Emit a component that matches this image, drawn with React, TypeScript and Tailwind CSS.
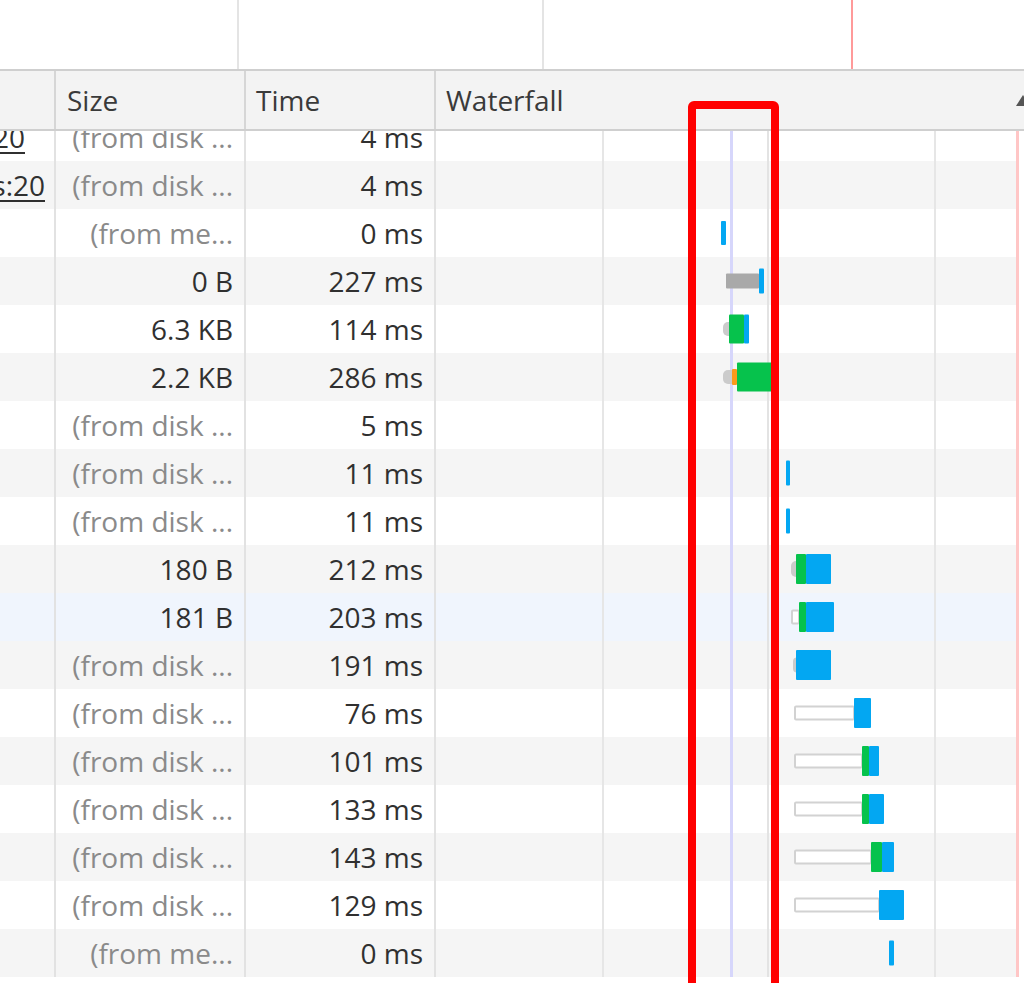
import React from "react";

type Bar = { x0: number; x1: number; h: number; c: string; kind?: "stub" | "outline" | "solid" };
type Row = {
  init?: { t: string; pr: number };
  size: string;
  dark?: boolean;
  time: string;
  bg: string;
  bars: Bar[];
};

const BLUE = "#03a7f2";
const GREEN = "#06c24c";
const GRAY = "#a9a9a9";
const STUB = "#cbcbcb";
const ORANGE = "#fb9a1b";
const W = "#ffffff";
const G = "#f5f5f5";
const SEL = "#f0f5fd";

const rows: Row[] = [
  { init: { t: "20", pr: 31 }, size: "(from disk ...", time: "4 ms", bg: W, bars: [] },
  { init: { t: "s:20", pr: 11 }, size: "(from disk ...", time: "4 ms", bg: G, bars: [] },
  { size: "(from me...", time: "0 ms", bg: W, bars: [{ x0: 721, x1: 726, h: 24, c: BLUE }] },
  {
    size: "0 B", dark: true, time: "227 ms", bg: G,
    bars: [
      { x0: 726, x1: 759, h: 15, c: GRAY },
      { x0: 759, x1: 764, h: 25, c: BLUE },
    ],
  },
  {
    size: "6.3 KB", dark: true, time: "114 ms", bg: W,
    bars: [
      { x0: 723, x1: 730, h: 14, c: STUB, kind: "stub" },
      { x0: 729, x1: 744, h: 29, c: GREEN },
      { x0: 744, x1: 749, h: 29, c: BLUE },
    ],
  },
  {
    size: "2.2 KB", dark: true, time: "286 ms", bg: G,
    bars: [
      { x0: 723, x1: 732, h: 14, c: STUB, kind: "stub" },
      { x0: 732, x1: 737, h: 16, c: ORANGE },
      { x0: 737, x1: 772, h: 29, c: GREEN },
    ],
  },
  { size: "(from disk ...", time: "5 ms", bg: W, bars: [] },
  { size: "(from disk ...", time: "11 ms", bg: G, bars: [{ x0: 786, x1: 790, h: 25, c: BLUE }] },
  { size: "(from disk ...", time: "11 ms", bg: W, bars: [{ x0: 786, x1: 790, h: 25, c: BLUE }] },
  {
    size: "180 B", dark: true, time: "212 ms", bg: G,
    bars: [
      { x0: 791, x1: 797, h: 16, c: STUB, kind: "stub" },
      { x0: 796, x1: 806, h: 30, c: GREEN },
      { x0: 806, x1: 831, h: 30, c: BLUE },
    ],
  },
  {
    size: "181 B", dark: true, time: "203 ms", bg: SEL,
    bars: [
      { x0: 791, x1: 800, h: 15, c: STUB, kind: "outline" },
      { x0: 799, x1: 806, h: 30, c: GREEN },
      { x0: 806, x1: 834, h: 30, c: BLUE },
    ],
  },
  {
    size: "(from disk ...", time: "191 ms", bg: G,
    bars: [
      { x0: 793, x1: 797, h: 15, c: STUB, kind: "stub" },
      { x0: 796, x1: 831, h: 30, c: BLUE },
    ],
  },
  {
    size: "(from disk ...", time: "76 ms", bg: W,
    bars: [
      { x0: 794, x1: 855, h: 15, c: STUB, kind: "outline" },
      { x0: 854, x1: 871, h: 30, c: BLUE },
    ],
  },
  {
    size: "(from disk ...", time: "101 ms", bg: G,
    bars: [
      { x0: 794, x1: 863, h: 15, c: STUB, kind: "outline" },
      { x0: 862, x1: 869, h: 30, c: GREEN },
      { x0: 869, x1: 879, h: 30, c: BLUE },
    ],
  },
  {
    size: "(from disk ...", time: "133 ms", bg: W,
    bars: [
      { x0: 794, x1: 863, h: 15, c: STUB, kind: "outline" },
      { x0: 862, x1: 869, h: 30, c: GREEN },
      { x0: 869, x1: 884, h: 30, c: BLUE },
    ],
  },
  {
    size: "(from disk ...", time: "143 ms", bg: G,
    bars: [
      { x0: 794, x1: 872, h: 15, c: STUB, kind: "outline" },
      { x0: 871, x1: 882, h: 30, c: GREEN },
      { x0: 882, x1: 894, h: 30, c: BLUE },
    ],
  },
  {
    size: "(from disk ...", time: "129 ms", bg: W,
    bars: [
      { x0: 794, x1: 880, h: 15, c: STUB, kind: "outline" },
      { x0: 879, x1: 904, h: 30, c: BLUE },
    ],
  },
  { size: "(from me...", time: "0 ms", bg: G, bars: [{ x0: 889, x1: 894, h: 25, c: BLUE }] },
];

const WF_LEFT = 436;

function BarEl({ b }: { b: Bar }) {
  const base: React.CSSProperties = {
    left: b.x0 - WF_LEFT,
    width: b.x1 - b.x0,
    height: b.h,
  };
  if (b.kind === "outline") {
    return (
      <div
        className="absolute top-1/2 -translate-y-1/2 rounded-[2px] border-2 border-[#d2d2d2] bg-white"
        style={base}
      />
    );
  }
  if (b.kind === "stub") {
    return (
      <div
        className="absolute top-1/2 -translate-y-1/2 rounded-l-[5px] bg-[#cbcbcb]"
        style={base}
      />
    );
  }
  return (
    <div
      className="absolute top-1/2 -translate-y-1/2 rounded-[1px]"
      style={{ ...base, backgroundColor: b.c }}
    />
  );
}

export default function App() {
  return (
    <div
      className="relative h-[983px] w-[1024px] overflow-hidden bg-white text-[28px] leading-none text-[#333]"
      style={{ fontFamily: '"Open Sans", "Noto Sans", sans-serif' }}
    >
      {/* overview strip */}
      <div className="flex h-[69px]">
        <div className="w-[239px] shrink-0 border-r-2 border-[#e4e4e4]" />
        <div className="w-[305px] shrink-0 border-r-2 border-[#e4e4e4]" />
        <div className="w-[309px] shrink-0 border-r-2 border-[#ff9a9a]" />
        <div className="flex-1" />
      </div>

      {/* header */}
      <div className="flex h-[62px] border-y-2 border-[#cfcfcf] bg-[#f3f3f3] text-[#3a3a3a]">
        <div className="w-[56px] shrink-0 border-r-2 border-[#d6d6d6]" />
        <div className="flex w-[190px] shrink-0 items-center border-r-2 border-[#d6d6d6] pl-[11px]">
          Size
        </div>
        <div className="flex w-[190px] shrink-0 items-center border-r-2 border-[#d6d6d6] pl-[10px]">
          Time
        </div>
        <div className="flex min-w-0 flex-1 items-center justify-between overflow-hidden pl-[10px]">
          <span>Waterfall</span>
          <svg width="14" height="11" viewBox="0 0 14 11" className="-mr-[6px] mt-[1px]">
            <polygon points="7,0 14,11 0,11" fill="#555" />
          </svg>
        </div>
      </div>

      {/* body */}
      <div className="relative h-[852px] overflow-hidden">
        <div className="-mt-[18px] flex flex-col">
          {rows.map((r, i) => (
            <div key={i} className="flex h-[48px]" style={{ backgroundColor: r.bg }}>
              <div className="flex w-[56px] shrink-0 items-center justify-end overflow-hidden border-r-2 border-[#e2e2e2]">
                {r.init && (
                  <span
                    className="whitespace-nowrap text-[#303030] underline decoration-2 underline-offset-[4px]"
                    style={{ paddingRight: r.init.pr - 2 }}
                  >
                    {r.init.t}
                  </span>
                )}
              </div>
              <div
                className={`flex w-[190px] shrink-0 items-center justify-end whitespace-nowrap border-r-2 border-[#e2e2e2] pr-[11px] ${
                  r.dark ? "text-[#303030]" : "text-[#8a8a8a]"
                }`}
              >
                {r.size}
              </div>
              <div className="flex w-[190px] shrink-0 items-center justify-end whitespace-nowrap border-r-2 border-[#e2e2e2] pr-[11px] text-[#303030]">
                {r.time}
              </div>
              <div className="relative flex-1">
                {/* vertical grid lines */}
                <div className="absolute inset-y-0 left-[166px] w-[2px] bg-[#e6e6e6]" />
                <div className="absolute inset-y-0 left-[294px] w-[3px] bg-[#d6d6fb]" />
                <div className="absolute inset-y-0 left-[331px] w-[2px] bg-[#e3e3e3]" />
                <div className="absolute inset-y-0 left-[498px] w-[2px] bg-[#e6e6e6]" />
                <div className="absolute inset-y-0 left-[580px] w-[3px] bg-[#ffc6c6]" />
                <div className="absolute inset-y-0 left-[583px] right-0 bg-white" />
                {r.bars.map((b, j) => (
                  <BarEl key={j} b={b} />
                ))}
              </div>
            </div>
          ))}
        </div>
      </div>

      {/* red annotation box */}
      <div className="absolute left-[688px] top-[101px] h-[900px] w-[91px] rounded-[6px] border-[8px] border-[#ff0000]" />
    </div>
  );
}
